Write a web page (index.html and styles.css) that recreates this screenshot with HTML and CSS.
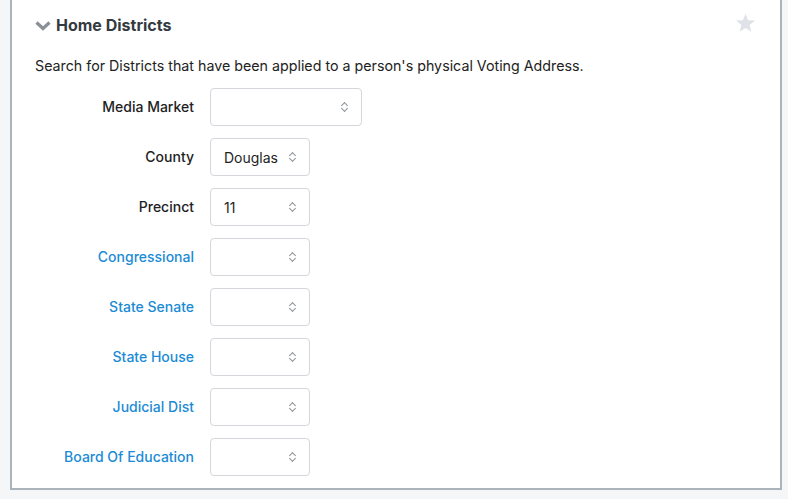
FILE: index.html
```html
<!DOCTYPE html>
<html>
<head>
<meta charset="utf-8">
<link rel="stylesheet" href="styles.css">
</head>
<body>
<div class="panel">
  <div class="panel-head">
    <div class="title">
      <svg class="chev" width="16" height="12" viewBox="0 0 16 12"><path d="M1.5 3.5 L8 9.5 L14.5 3.5" fill="none" stroke="#8a9098" stroke-width="3.2" stroke-linejoin="miter"/></svg>
      <span>Home Districts</span>
    </div>
    <svg class="star" width="21" height="20" viewBox="0 0 24 23"><path d="M12 0.8 L14.9 8.3 L23 8.7 L16.7 13.8 L18.8 21.7 L12 17.2 L5.2 21.7 L7.3 13.8 L1 8.7 L9.1 8.3 Z" fill="#dfe2e7"/></svg>
  </div>
  <p class="desc">Search for Districts that have been applied to a person's physical Voting Address.</p>
  <div class="form">
    <div class="row"><label class="lbl">Media Market</label><div class="sel wide"><span></span><i class="arr"></i></div></div>
    <div class="row"><label class="lbl">County</label><div class="sel"><span>Douglas</span><i class="arr"></i></div></div>
    <div class="row"><label class="lbl">Precinct</label><div class="sel"><span>11</span><i class="arr"></i></div></div>
    <div class="row"><label class="lbl link">Congressional</label><div class="sel"><span></span><i class="arr"></i></div></div>
    <div class="row"><label class="lbl link">State Senate</label><div class="sel"><span></span><i class="arr"></i></div></div>
    <div class="row"><label class="lbl link">State House</label><div class="sel"><span></span><i class="arr"></i></div></div>
    <div class="row"><label class="lbl link">Judicial Dist</label><div class="sel"><span></span><i class="arr"></i></div></div>
    <div class="row"><label class="lbl link">Board Of Education</label><div class="sel"><span></span><i class="arr"></i></div></div>
  </div>
</div>
</body>
</html>
```

FILE: styles.css
```css
html, body {
  margin: 0;
  padding: 0;
  background: #f5f6f8;
  font-family: Inter, "Liberation Sans", Arial, sans-serif;
  color: #222;
}
.panel {
  margin-left: 10px;
  width: 745px;
  background: #fff;
  border: 2px solid #abb3bb;
  border-top: none;
  padding: 0 0 12px 23px;
  box-sizing: content-box;
}
.panel-head {
  display: flex;
  align-items: center;
  justify-content: space-between;
  height: 50px;
  padding-right: 24px;
}
.title {
  display: flex;
  align-items: center;
  gap: 5px;
  font-weight: 700;
  font-size: 16px;
  color: #333a40;
}
.chev { display: block; }
.star { display: block; margin-top: -4px; }
.desc {
  margin: 6px 0 0;
  font-size: 14.25px;
  line-height: 20px;
  color: #222;
}
.form {
  display: flex;
  flex-direction: column;
  gap: 12px;
  margin-top: 12px;
}
.row {
  display: flex;
  align-items: center;
}
.lbl {
  width: 159px;
  text-align: right;
  padding-right: 16px;
  font-size: 14px;
  line-height: 18px;
  padding-bottom: 1px;
  font-weight: 500;
  color: #222;
}
.lbl.link { color: #1b8bd6; }
.sel {
  width: 100px;
  height: 38px;
  box-sizing: border-box;
  border: 1px solid #d3d6da;
  border-radius: 4px;
  display: flex;
  align-items: center;
  justify-content: space-between;
  padding: 0 13px 0 13px;
  font-size: 14px;
  color: #222;
}
.sel.wide { width: 152px; }
.arr {
  display: block;
  width: 7px;
  height: 12px;
  position: relative;
}
.arr::before, .arr::after {
  content: "";
  position: absolute;
  left: 1px;
  width: 4px;
  height: 4px;
  border: solid #8d9298;
  border-width: 1px 0 0 1px;
}
.arr::before { top: 2px; transform: rotate(45deg); }
.arr::after { top: 5px; transform: rotate(225deg); }
```
